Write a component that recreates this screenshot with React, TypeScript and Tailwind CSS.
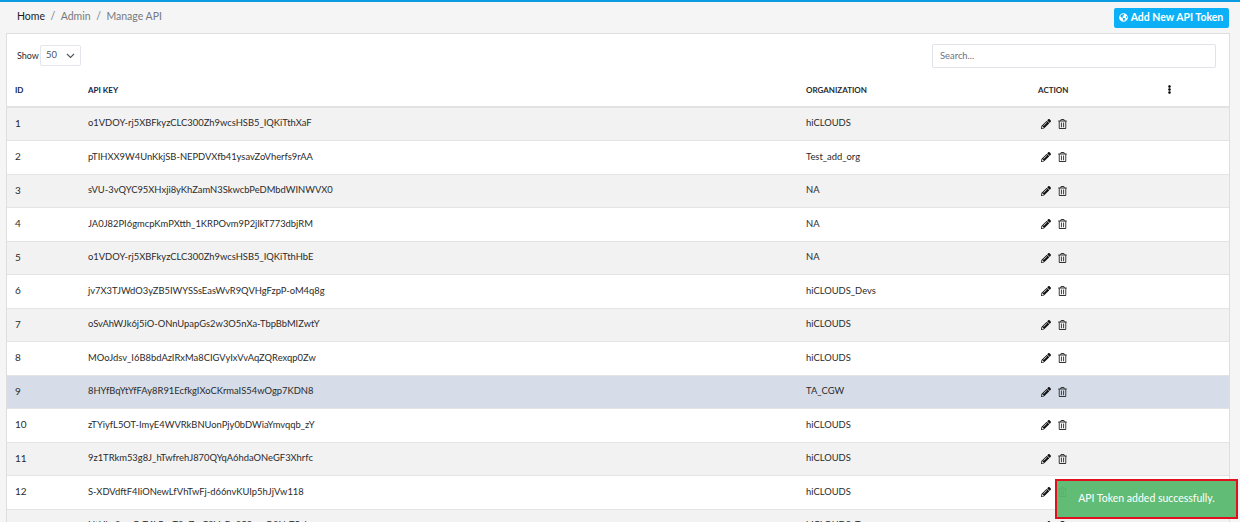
import { FaEllipsisV, FaGlobeAmericas, FaPencilAlt, FaRegTrashAlt } from 'react-icons/fa';

const rows = [
  ['1', 'o1VDOY-rj5XBFkyzCLC300Zh9wcsHSB5_IQKiTthXaF', 'hiCLOUDS'],
  ['2', 'pTIHXX9W4UnKkjSB-NEPDVXfb41ysavZoVherfs9rAA', 'Test_add_org'],
  ['3', 'sVU-3vQYC95XHxji8yKhZamN3SkwcbPeDMbdWINWVX0', 'NA'],
  ['4', 'JA0J82PI6gmcpKmPXtth_1KRPOvm9P2jIkT773dbjRM', 'NA'],
  ['5', 'o1VDOY-rj5XBFkyzCLC300Zh9wcsHSB5_IQKiTthHbE', 'NA'],
  ['6', 'jv7X3TJWdO3yZB5IWYSSsEasWvR9QVHgFzpP-oM4q8g', 'hiCLOUDS_Devs'],
  ['7', 'oSvAhWJk6j5iO-ONnUpapGs2w3O5nXa-TbpBbMIZwtY', 'hiCLOUDS'],
  ['8', 'MOoJdsv_I6B8bdAzIRxMa8CIGVyIxVvAqZQRexqp0Zw', 'hiCLOUDS'],
  ['9', '8HYfBqYtYfFAy8R91EcfkgIXoCKrmaIS54wOgp7KDN8', 'TA_CGW'],
  ['10', 'zTYiyfL5OT-ImyE4WVRkBNUonPjy0bDWiaYmvqqb_zY', 'hiCLOUDS'],
  ['11', '9z1TRkm53g8J_hTwfrehJ870QYqA6hdaONeGF3Xhrfc', 'hiCLOUDS'],
  ['12', 'S-XDVdftF4IiONewLfVhTwFj-d66nvKUIp5hJjVw118', 'hiCLOUDS'],
  ['13', 'NtHkv8mzQrT4LPenT3eZssC9VpBn25SsnaQ3NcT5ak', 'hiCLOUDS_T'],
];

function rowColor(id: string, i: number) {
  if (id === '9') return 'bg-[#d6dde8]';
  return i % 2 === 0 ? 'bg-[#f2f2f2]' : 'bg-white';
}

export default function App() {
  return (
    <div className="relative h-[522px] overflow-hidden border-t-2 border-[#0a9be0] bg-[#f5f5f5] font-['Lato','Open_Sans',sans-serif] text-[9.4px] text-[#2b2b2b]">
      {/* Breadcrumb */}
      <div className="flex h-[31px] items-center justify-between pb-[1px] pl-[17px] pr-[11px]">
        <div className="flex items-center text-[10.5px] text-[#75797e]">
          <span className="text-[#1c1c1c]">Home</span>
          <span className="mx-[5.5px]">/</span>
          <span>Admin</span>
          <span className="mx-[5.5px]">/</span>
          <span>Manage API</span>
        </div>
        <button className="mt-[1px] flex h-[20px] w-[115px] items-center justify-center gap-[3px] rounded-[2px] bg-[#0cb0f7] pr-[1px] text-[10.5px] font-bold text-white">
          <FaGlobeAmericas className="h-[9px] w-[9px]" />
          Add New API Token
        </button>
      </div>

      {/* Card */}
      <div className="ml-[6px] mr-[10px] border border-b-0 border-[#dedede] bg-white">
        <div className="flex h-[40px] items-start justify-between pl-[10px] pr-[13px] pt-[10px]">
          <div className="flex items-center gap-[1px] pt-[1px]">
            <span className="text-[9px]">Show</span>
            <div className="flex h-[21px] w-[41px] items-center justify-between rounded-[2px] border border-[#e3e6ea] pl-[5px] pr-[5px] text-[#4a5560]">
              <span>50</span>
              <svg width="9" height="6" viewBox="0 0 9 6" fill="none" stroke="#4a5560" strokeWidth="1.1">
                <path d="M1 1l3.5 3.5L8 1" />
              </svg>
            </div>
          </div>
          <div className="flex h-[24px] w-[284px] items-center rounded-[2px] border border-[#e0e3e7] pl-[7px] text-[#6b7280]">
            Search...
          </div>
        </div>

        <table className="w-full table-fixed border-collapse">
          <colgroup>
            <col className="w-[81px]" />
            <col className="w-[718px]" />
            <col className="w-[232px]" />
            <col className="w-[130px]" />
            <col />
          </colgroup>
          <thead>
            <tr className="h-[33px] border-b-2 border-[#e2e2e2] text-left text-[8px] font-bold">
              <th className="pb-[1px] pl-[8px] text-[#12264a]">ID</th>
              <th className="pb-[1px] text-[#12264a]">API KEY</th>
              <th className="pb-[1px]">ORGANIZATION</th>
              <th className="pb-[1px]">ACTION</th>
              <th className="pb-[1px]">
                <FaEllipsisV className="-ml-[3px] h-[9px] w-[9px] text-black" />
              </th>
            </tr>
          </thead>
          <tbody>
            {rows.map((r, i) => (
              <tr key={r[0]} className={`h-[33.5px] border-b border-[#e4e4e4] ${rowColor(r[0], i)}`}>
                <td className="pb-[1px] pl-[8px] text-[10px]">{r[0]}</td>
                <td className="pb-[1px]">{r[1]}</td>
                <td className="pb-[1px]">{r[2]}</td>
                <td>
                  <div className="flex items-center gap-[7px] pl-[3px]">
                    <FaPencilAlt className="h-[10px] w-[10px] text-[#111]" />
                    <FaRegTrashAlt className="h-[10px] w-[9px] text-[#333]" />
                  </div>
                </td>
                <td />
              </tr>
            ))}
          </tbody>
        </table>
      </div>

      {/* Toast */}
      <div className="absolute left-[1055px] top-[477px] flex h-[40px] w-[183px] items-center justify-center border-[2px] border-[#e0101e] bg-[#58b86e]/95 text-[10.5px] text-white">
        API Token added successfully.
      </div>
    </div>
  );
}
